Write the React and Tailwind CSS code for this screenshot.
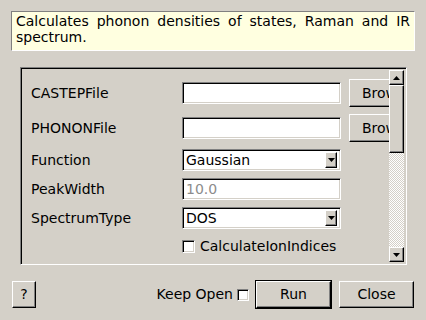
import React from 'react';

const font = { fontFamily: '"DejaVu Sans", sans-serif' };

// sunken 2px bevel (entries, frame)
const sunken =
  'border border-t-[#808080] border-l-[#808080] border-b-white border-r-white shadow-[inset_1px_1px_0_#000,inset_-1px_-1px_0_#d4d0c8]';
// raised 2px bevel (buttons)
const raised =
  'border border-t-white border-l-white border-b-[#000] border-r-[#000] shadow-[inset_-1px_-1px_0_#808080]';

const Arrow = ({ down }) => (
  <svg width="7" height="4" viewBox="0 0 7 4">
    <polygon points={down ? '0,0 7,0 3.5,4' : '0,4 7,4 3.5,0'} fill="#000" />
  </svg>
);

const Entry = ({ value, disabled }) => (
  <div className={`w-[159px] h-[22px] shrink-0 bg-white flex items-center px-[3px] text-[14px] ${sunken} ${disabled ? 'text-[#8c8c8c]' : 'text-black'}`}>
    {value}
  </div>
);

const Combo = ({ value }) => (
  <div className={`w-[159px] h-[22px] shrink-0 bg-white flex items-center pl-[3px] pr-[3px] text-[14px] text-black ${sunken}`}>
    <span className="flex-1">{value}</span>
    <div className={`w-[12px] h-[16px] bg-[#d4d0c8] flex items-center justify-center ${raised}`}>
      <Arrow down />
    </div>
  </div>
);

const BrowseButton = () => (
  <div className={`w-[80px] h-[28px] shrink-0 bg-[#d4d0c8] flex items-center pl-[12px] text-[14px] whitespace-nowrap ${raised}`}>
    Browse...
  </div>
);

const Row = ({ label, children, className = '' }) => (
  <div className={`flex items-center ${className}`}>
    <div className="w-[151px] shrink-0 text-[14px]">{label}</div>
    {children}
  </div>
);

export default function App() {
  return (
    <div className="w-[426px] h-[320px] bg-[#d4d0c8] text-black relative overflow-hidden" style={font}>
      {/* description */}
      <div className="ml-[11px] mt-[11px] w-[404px] h-[40px] bg-[#ffffe0] border-t border-l border-[#808080] border-b border-r border-b-white border-r-white px-[4px] pt-[1px] text-[14px] leading-[16px] text-justify">
        Calculates phonon densities of states, Raman and IR spectrum.
      </div>

      {/* scrolled parameter frame */}
      <div className={`ml-[20px] mt-[16px] w-[387px] h-[198px] flex p-[2px] ${sunken}`}>
        <div className="flex-1 min-w-0 overflow-hidden pl-[8px]">
          <Row label="CASTEPFile" className="mt-[9px] h-[28px]">
            <Entry value="" />
            <div className="ml-[8px] shrink-0"><BrowseButton /></div>
          </Row>
          <Row label="PHONONFile" className="mt-[7px] h-[28px]">
            <Entry value="" />
            <div className="ml-[8px] shrink-0"><BrowseButton /></div>
          </Row>
          <Row label="Function" className="mt-[7px] h-[22px]">
            <Combo value="Gaussian" />
          </Row>
          <Row label="PeakWidth" className="mt-[7px] h-[22px]">
            <Entry value="10.0" disabled />
          </Row>
          <Row label="SpectrumType" className="mt-[7px] h-[22px]">
            <Combo value="DOS" />
          </Row>
          <Row label="" className="mt-[9px] h-[16px]">
            <div className={`w-[13px] h-[13px] shrink-0 bg-white ${sunken}`} />
            <span className="ml-[5px] text-[14px] whitespace-nowrap">CalculateIonIndices</span>
          </Row>
        </div>

        {/* scrollbar */}
        <div className="w-[15px] shrink-0 flex flex-col">
          <div className={`h-[15px] bg-[#d4d0c8] flex items-center justify-center ${raised}`}>
            <Arrow />
          </div>
          <div className={`h-[68px] bg-[#d4d0c8] ${raised}`} />
          <div className="flex-1 bg-[repeating-conic-gradient(#ffffff_0_25%,#d4d0c8_0_50%)] bg-[length:2px_2px]" />
          <div className={`h-[15px] bg-[#d4d0c8] flex items-center justify-center ${raised}`}>
            <Arrow down />
          </div>
        </div>
      </div>

      {/* bottom buttons */}
      <div className="flex items-center mt-[15px] px-[12px]">
        <div className={`w-[24px] h-[27px] bg-[#d4d0c8] flex items-center justify-center text-[14px] ${raised}`}>?</div>
        <div className="flex-1" />
        <span className="text-[14px]">Keep Open</span>
        <div className={`ml-[4px] w-[12px] h-[12px] bg-white ${sunken}`} />
        <div className="ml-[6px] border border-black">
          <div className={`w-[75px] h-[27px] bg-[#d4d0c8] flex items-center justify-center text-[14px] ${raised}`}>Run</div>
        </div>
        <div className={`ml-[7px] w-[75px] h-[27px] bg-[#d4d0c8] flex items-center justify-center text-[14px] ${raised}`}>Close</div>
      </div>
    </div>
  );
}
